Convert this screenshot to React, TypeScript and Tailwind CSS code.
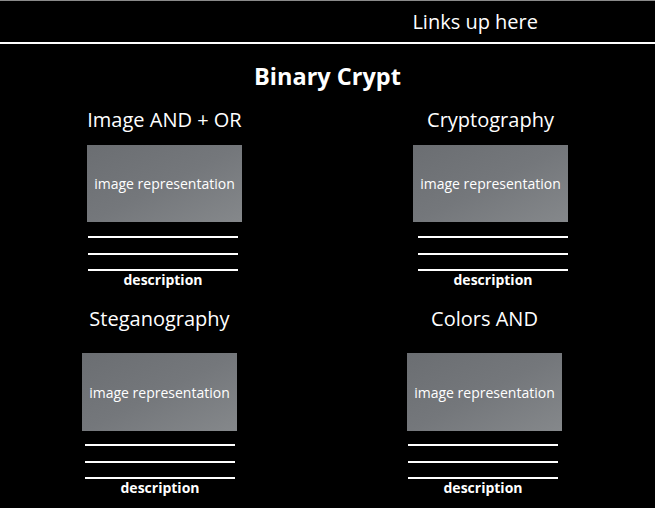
const font = { fontFamily: '"Open Sans", "Liberation Sans", sans-serif' };

interface CardProps {
  title: string;
  lineOffset: string;
  imageGap: string;
  imageH: string;
  lineGap: string;
}

const Card = ({ title, lineOffset, imageGap, imageH, lineGap }: CardProps) => (
  <div className="flex w-[155px] flex-col">
    <h2 className="-mx-4 h-[28px] whitespace-nowrap text-center text-[20px] leading-[28px] text-white">{title}</h2>
    <div
      className={`${imageGap} ${imageH} flex w-[155px] items-center justify-center bg-gradient-to-br from-[#6b6e72] via-[#74777b] to-[#85888b] text-[14px] text-white`}
    >
      image representation
    </div>
    <div className={`${lineGap} ${lineOffset} flex w-[150px] flex-col`}>
      <div className="h-[2px] bg-white" />
      <div className="mt-[15px] h-[2px] bg-white" />
      <div className="mt-[14px] h-[2px] bg-white" />
      <p className="text-center text-[14px] font-bold leading-[18px] text-white">description</p>
    </div>
  </div>
);

export default function App() {
  return (
    <div className="h-[508px] w-full overflow-hidden bg-black" style={font}>
      {/* Nav */}
      <header className="flex h-[44px] items-center justify-end border-t border-b-2 border-t-[#8a8a8a] border-b-white pr-[117px]">
        <span className="text-[20px] text-white">Links up here</span>
      </header>

      <h1 className="mt-[16px] text-center text-[23.5px] font-bold leading-[32px] text-white">Binary Crypt</h1>

      {/* Row 1 */}
      <div className="mt-[14px] flex gap-[171px] pl-[87px]">
        <Card title="Image AND + OR" imageGap="mt-[11px]" imageH="h-[77px]" lineGap="mt-[14px]" lineOffset="ml-[1px]" />
        <Card title="Cryptography" imageGap="mt-[11px]" imageH="h-[77px]" lineGap="mt-[14px]" lineOffset="ml-[5px]" />
      </div>

      {/* Row 2 */}
      <div className="mt-[16px] flex gap-[170px] pl-[82px]">
        <Card title="Steganography" imageGap="mt-[20px]" imageH="h-[78px]" lineGap="mt-[13px]" lineOffset="ml-[3px]" />
        <Card title="Colors AND" imageGap="mt-[20px]" imageH="h-[78px]" lineGap="mt-[13px]" lineOffset="ml-[1px]" />
      </div>
    </div>
  );
}
